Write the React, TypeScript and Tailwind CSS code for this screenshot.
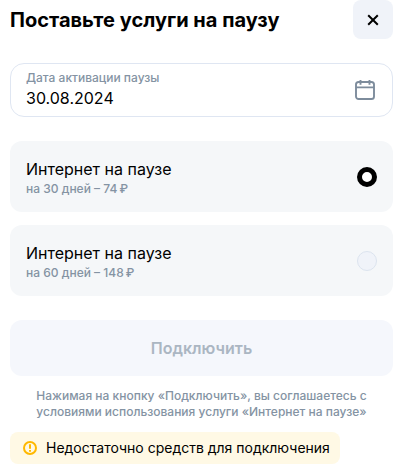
import { useState } from "react";

interface PauseOption {
  id: string;
  title: string;
  details: string;
}

const options: PauseOption[] = [
  { id: "pause-30", title: "Интернет на паузе", details: "на 30 дней – 74\u2009₽" },
  { id: "pause-60", title: "Интернет на паузе", details: "на 60 дней – 148\u2009₽" },
];

function CloseIcon() {
  return (
    <svg width="12" height="12" viewBox="0 0 12 12" fill="none" stroke="currentColor" strokeWidth="2" aria-hidden="true">
      <path d="M1.2 1.2 10.8 10.8M10.8 1.2 1.2 10.8" />
    </svg>
  );
}

function CalendarIcon() {
  return (
    <svg width="20" height="20" viewBox="0 0 20 20" fill="none" stroke="currentColor" strokeWidth="1.9" aria-hidden="true">
      <rect x="1" y="2" width="18" height="17" rx="2.6" />
      <path d="M1 7.4h18M5.5 0v4.8M14.5 0v4.8" />
    </svg>
  );
}

function WarningIcon() {
  return (
    <svg width="14" height="14" viewBox="0 0 14 14" fill="none" stroke="currentColor" strokeWidth="2" aria-hidden="true">
      <circle cx="7" cy="7" r="6" />
      <path d="M7 3.2v4.6M7 8.9v1.9" />
    </svg>
  );
}

export default function App() {
  const [date, setDate] = useState("30.08.2024");
  const [selected, setSelected] = useState("pause-30");

  return (
    <main className="bg-white pr-[7px] pb-2 pl-[10px] font-['Inter','Liberation_Sans',sans-serif] text-black">
      <header className="flex items-center justify-between">
        <h1 className="text-xl font-bold">Поставьте услуги на паузу</h1>
        <button
          type="button"
          aria-label="Закрыть"
          className="flex h-[39px] w-10 cursor-pointer items-center justify-center rounded-lg bg-[#f0f3f9]"
        >
          <CloseIcon />
        </button>
      </header>

      <form onSubmit={(e) => e.preventDefault()}>
        {/* Activation date */}
        <div className="mt-6 flex h-[54px] items-center rounded-[14px] border border-[#dfe6f2] pr-[17px] pl-[15px]">
          <div className="flex min-w-0 flex-1 flex-col">
            <label htmlFor="date" className="text-xs leading-4 font-medium text-[#8493a3]">
              Дата активации паузы
            </label>
            <input
              id="date"
              type="text"
              value={date}
              onChange={(e) => setDate(e.target.value)}
              className="h-6 w-full bg-transparent text-base outline-none"
            />
          </div>
          <button type="button" aria-label="Открыть календарь" className="cursor-pointer text-[#7d8c9c]">
            <CalendarIcon />
          </button>
        </div>

        {/* Pause length */}
        <div className="mt-6 flex flex-col gap-[13px]">
          {options.map((option) => (
            <label
              key={option.id}
              htmlFor={option.id}
              className="flex h-[71px] cursor-pointer items-center justify-between rounded-xl bg-[#f5f7f9] px-4"
            >
              <span className="flex flex-col">
                <span className="text-base leading-6">{option.title}</span>
                <span className="text-xs leading-4 font-medium text-[#8493a3]">{option.details}</span>
              </span>
              <input
                id={option.id}
                type="radio"
                name="pause"
                checked={selected === option.id}
                onChange={() => setSelected(option.id)}
                className="size-5 shrink-0 appearance-none rounded-full border border-[#dce4ef] bg-[#f0f3f9] checked:border-[5px] checked:border-black checked:bg-white"
              />
            </label>
          ))}
        </div>

        <button
          type="submit"
          disabled
          className="mt-6 h-14 w-full rounded-xl bg-[#f5f7fc] text-base font-semibold text-[#abb6c2]"
        >
          Подключить
        </button>
      </form>

      <p className="mt-3 px-5 text-center text-xs leading-4 font-medium text-[#8493a3]">
        Нажимая на кнопку «Подключить», вы соглашаетесь с условиями использования услуги «Интернет на паузе»
      </p>

      <div role="alert" className="mt-3 flex h-8 w-fit items-center gap-[9px] rounded-lg bg-[#fff9e5] pr-[10px] pl-[13px] text-sm">
        <span className="text-[#ffb800]">
          <WarningIcon />
        </span>
        Недостаточно средств для подключения
      </div>
    </main>
  );
}
